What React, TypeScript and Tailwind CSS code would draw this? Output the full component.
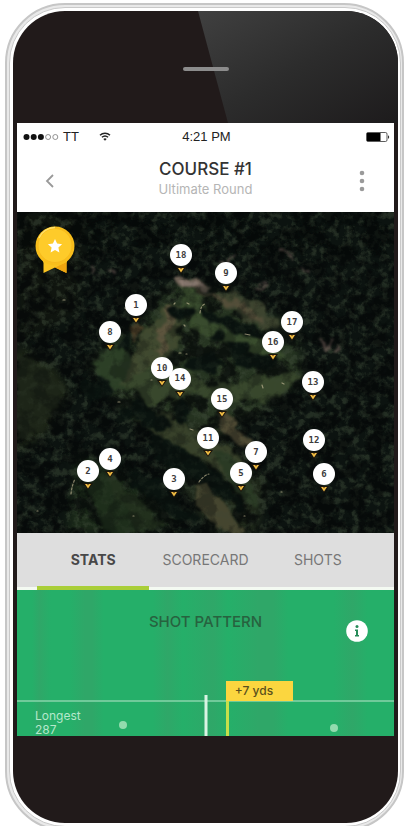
import React from "react";

const MAP_WIDTH = 377;
const MAP_HEIGHT = 321;

const holes = [
  { n: 18, x: 164, y: 43 },
  { n: 9, x: 209, y: 61 },
  { n: 1, x: 119, y: 93 },
  { n: 8, x: 93, y: 120 },
  { n: 17, x: 275, y: 110 },
  { n: 16, x: 256, y: 130 },
  { n: 10, x: 145, y: 156 },
  { n: 14, x: 163, y: 167 },
  { n: 15, x: 205, y: 187 },
  { n: 13, x: 296, y: 170 },
  { n: 11, x: 191, y: 226 },
  { n: 12, x: 297, y: 228 },
  { n: 7, x: 239, y: 240 },
  { n: 5, x: 224, y: 261 },
  { n: 6, x: 307, y: 262 },
  { n: 4, x: 93, y: 247 },
  { n: 2, x: 71, y: 259 },
  { n: 3, x: 157, y: 267 },
];

function SignalDots() {
  return (
    <svg width="36" height="8" viewBox="0 0 36 8" aria-hidden="true">
      <circle cx="3.5" cy="4" r="3" fill="#111" />
      <circle cx="10.7" cy="4" r="3" fill="#111" />
      <circle cx="17.9" cy="4" r="3" fill="#111" />
      <circle cx="25.1" cy="4" r="2.5" fill="none" stroke="#777" strokeWidth="0.8" />
      <circle cx="32.3" cy="4" r="2.5" fill="none" stroke="#777" strokeWidth="0.8" />
    </svg>
  );
}

function WifiIcon() {
  return (
    <svg width="12" height="9" viewBox="0 0 12 9" fill="none" stroke="#222" aria-hidden="true">
      <path d="M1 3.2C3.8.6 8.2.6 11 3.2" strokeWidth="1.5" />
      <path d="M2.9 5.3c1.8-1.6 4.4-1.6 6.2 0" strokeWidth="1.4" />
      <path d="M6 8.8 4.3 7c1-.9 2.4-.9 3.4 0Z" fill="#222" stroke="none" />
    </svg>
  );
}

function BatteryIcon() {
  return (
    <svg width="24" height="10" viewBox="0 0 24 10" aria-hidden="true">
      <rect x="0.5" y="0.5" width="20.5" height="9" rx="1.5" fill="#fff" stroke="#333" strokeWidth="0.8" />
      <rect x="1" y="1" width="13.5" height="8" fill="#000" />
      <path d="M22 3.2c1.6.4 1.6 3.2 0 3.6Z" fill="#333" />
    </svg>
  );
}

function AwardBadge() {
  return (
    <svg className="absolute left-[17px] top-[13px]" width="42" height="50" viewBox="0 0 42 50" role="img" aria-label="Award">
      <path d="M8 34h26l-1.500 4v10L21 42.500 9.500 48V38Z" fill="#fbc421" />
      <path d="M21 42.500 32.500 37v11Z" fill="#f0a50f" />
      <circle cx="21" cy="21" r="19.5" fill="#f9bf1c" />
      <circle cx="21" cy="20.500" r="17" fill="#fecb2a" stroke="#f6b81d" strokeWidth="0.8" />
      <path d="M5 13A18 18 0 0 1 21 2.500" fill="none" stroke="#ffe06a" strokeWidth="1.500" />
      <path d="m21 14 2.100 4.600 5 .6-3.700 3.400 1 4.900-4.400-2.500-4.400 2.500 1-4.900-3.700-3.400 5-.6Z" fill="#fff" />
    </svg>
  );
}

function Terrain() {
  return (
    <svg
      className="block h-auto w-full"
      viewBox="0 0 377 321"
      colorInterpolationFilters="sRGB"
      role="img"
      aria-label="Aerial view of the course"
    >
      <defs>
        <filter id="soft" x="-10%" y="-10%" width="120%" height="120%">
          <feGaussianBlur stdDeviation="5" />
        </filter>
        <filter id="rough" x="-10%" y="-10%" width="120%" height="120%">
          <feTurbulence type="fractalNoise" baseFrequency="0.07" numOctaves="3" seed="5" result="n" />
          <feDisplacementMap in="SourceGraphic" in2="n" scale="16" xChannelSelector="R" yChannelSelector="G" />
          <feGaussianBlur stdDeviation="0.8" />
        </filter>
        <filter id="canopy" x="0" y="0" width="100%" height="100%">
          <feTurbulence type="fractalNoise" baseFrequency="0.06" numOctaves="5" seed="11" />
          <feColorMatrix values="0 0 0 0 0.02  0 0 0 0 0.03  0 0 0 0 0.03  5 0 0 0 -2.1" />
        </filter>
        <filter id="leaves" x="0" y="0" width="100%" height="100%">
          <feTurbulence type="fractalNoise" baseFrequency="0.14" numOctaves="4" seed="3" />
          <feColorMatrix values="0 0 0 0 0.24  0 0 0 0 0.29  0 0 0 0 0.22  0 4 0 0 -1.8" />
        </filter>
      </defs>
      <rect width="377" height="321" fill="#0c1310" />
      <g filter="url(#soft)">
        <path d="M0 132 40 158 52 185 28 222 0 240Z" fill="#1e2617" />
        <path d="M0 0 70 0 60 100 0 130Z" fill="#10150f" />
        <path d="M70 150 124 108 155 72 210 77 276 116 290 165 235 205 180 225 110 205Z" fill="#263421" />
        <path d="M60 240 110 265 165 310 100 321 50 321Z" fill="#1b2a19" />
        <path d="M130 200 200 215 250 270 240 321 195 321 160 270Z" fill="#20291b" />
      </g>
      <rect width="377" height="321" filter="url(#leaves)" opacity="0.4" />
      <rect width="377" height="321" filter="url(#canopy)" opacity="0.65" />
      <g filter="url(#rough)">
        <path d="M0 140 38 160 48 180 22 220 0 228Z" fill="#1d2518" />
        <path d="M76 150 98 130 118 150 126 170 102 180 80 166Z" fill="#2c3f26" />
        <path d="M124 127 150 90 168 92 160 130 140 160 120 180 104 172Z" fill="#40492f" />
        <path d="M164 76 184 82 194 104 240 124 270 142 260 150 215 136 176 116Z" fill="#394c2d" />
        <path d="M196 78 240 90 264 115 250 120 210 95Z" fill="#3d442f" />
        <path d="M105 172 150 148 198 176 262 160 284 166 264 184 210 192 180 182 130 192Z" fill="#38472c" />
        <path d="M118 204 152 200 172 216 210 232 235 264 218 270 184 246 140 230Z" fill="#38412a" />
        <path d="M66 264 82 260 108 292 128 321 88 321Z" fill="#1e2e1b" />
        <path d="M84 265 104 270 148 314 122 318Z" fill="#22301d" />
        <path d="M178 268 194 276 230 321 206 321 178 292Z" fill="#45452f" />
        <path d="M194 238 206 234 228 262 244 292 230 295Z" fill="#2a3a24" />
        <path d="M150 91 157 91 155 118 145 143 138 139Z" fill="#5c543d" />
        <path d="M176 78 208 84 250 106 248 112 206 90Z" fill="#544e39" />
        <path d="M205 190 212 205 234 232 222 233 202 210Z" fill="#4f4a34" />
        <path d="M110 118 118 112 128 118 118 130Z" fill="#453924" />
        <path d="M157 65 178 65 192 74 185 79 160 77Z" fill="#6c6054" />
      </g>
      <g fill="#0a130f" filter="url(#rough)">
        <ellipse cx="163" cy="101" rx="12" ry="8" />
        <ellipse cx="202" cy="124" rx="9" ry="5" />
        <ellipse cx="222" cy="137" rx="12" ry="8" />
        <ellipse cx="186" cy="151" rx="20" ry="8" />
        <ellipse cx="239" cy="150" rx="24" ry="7" />
        <ellipse cx="80" cy="177" rx="17" ry="10" />
        <ellipse cx="120" cy="199" rx="18" ry="9" />
        <ellipse cx="166" cy="198" rx="7" ry="13" />
        <ellipse cx="139" cy="211" rx="17" ry="9" />
        <ellipse cx="109" cy="132" rx="5" ry="10" />
        <path d="M182 95 233 112 251 127 231 125 183 105Z" />
        <path d="M130 220 180 244 217 278 229 303 195 277 140 247Z" />
        <path d="M106 252 144 271 181 308 164 310 115 274Z" />
      </g>
      <rect width="377" height="321" filter="url(#leaves)" opacity="0.16" />
      <rect width="377" height="321" filter="url(#canopy)" opacity="0.3" />
      <g fill="none" stroke="#c9bd99" strokeLinecap="round" strokeWidth="1.2" opacity="0.65">
        <path d="M54 282q1-9 4-15M182 270q5-7 10-8M183 101q1-8 5-9" strokeDasharray="2 2" />
        <path d="m157 92 1-1M170 91l2 1M134 168h1M228 122l5 1M265 171l2 1M245 173l1 3M162 141h2M169 142h1M101 190h2M173 217l3 1M167 113l1 1M108 96l2 2M20 299h1M116 304h1M227 304h1M46 88h2M264 280h1" />
      </g>
      <g fill="none" stroke="#7c6660" strokeWidth="2.500" opacity="0.6" filter="url(#rough)">
        <path d="m262 38 14 5M284 54l5 9 5-2M302 126l10 9 5-7M316 142l9-3M206 53l14-9M242 72l8 4M74 56l8 4M90 58l5 4" />
      </g>
      <path d="M162 70 175 69 187 73 180 77 164 76Z" fill="#9a8880" opacity="0.65" filter="url(#rough)" />
    </svg>
  );
}

function Pin({ n, x, y }: { n: number; x: number; y: number }) {
  return (
    <button
      type="button"
      aria-label={`Hole ${n}`}
      className="absolute flex w-[22px] -translate-x-1/2 flex-col items-center"
      style={{ left: `${(x / MAP_WIDTH) * 100}%`, top: `${((y - 11) / MAP_HEIGHT) * 100}%` }}
    >
      <span className="flex size-[22px] items-center justify-center rounded-full bg-white font-['DejaVu_Sans_Mono',monospace] text-[9px] font-bold leading-none text-[#3c3c3c]">
        {n}
      </span>
      <svg className="mt-px" width="10" height="7" viewBox="0 0 10 7" aria-hidden="true">
        <path d="M0 0h10L5 7Z" fill="#1c150c" />
        <path d="M2 1h6L5 5.500Z" fill="#f0bd45" />
        <path d="M4 1h2L5 2.500Z" fill="#5b3d12" />
      </svg>
    </button>
  );
}

function StatusBar() {
  return (
    <div className="grid h-[27px] grid-cols-3 items-center pl-[6px] pr-1 font-['Liberation_Sans',Arial,sans-serif] text-[13px] leading-4 text-[#222]">
      <div className="flex items-center gap-1">
        <SignalDots />
        <span>TT</span>
        <span className="ml-4">
          <WifiIcon />
        </span>
      </div>
      <span className="text-center">4:21 PM</span>
      <span className="flex justify-end">
        <BatteryIcon />
      </span>
    </div>
  );
}

function Header() {
  return (
    <header className="flex h-[62px] items-center justify-between px-6">
      <button type="button" aria-label="Back" className="flex w-4 justify-center">
        <svg width="9" height="14" viewBox="0 0 9 14" fill="none" stroke="#999" strokeWidth="1.8">
          <path d="M8 1 2 7l6 6" />
        </svg>
      </button>
      <div className="pb-1 text-center">
        <h1 className="text-[17px] font-medium leading-5 text-[#333]">COURSE #1</h1>
        <p className="text-[13px] leading-5 text-[#b5b5b5]">Ultimate Round</p>
      </div>
      <button type="button" aria-label="More options" className="flex w-4 justify-center">
        <svg width="6" height="22" viewBox="0 0 6 22" fill="#9a9a9a">
          <circle cx="3" cy="3" r="2.300" />
          <circle cx="3" cy="11" r="2.300" />
          <circle cx="3" cy="19" r="2.300" />
        </svg>
      </button>
    </header>
  );
}

function Tabs() {
  return (
    <nav className="flex h-[57px] border-b-[3px] border-[#f4faf2] bg-[#dedede] px-5 text-sm text-[#777]">
      <button type="button" aria-current="page" className="-mb-[3px] flex-1 border-b-4 border-[#a9ce38] font-bold text-[#484848]">
        STATS
      </button>
      <button type="button" className="flex-1">
        SCORECARD
      </button>
      <button type="button" className="flex-1">
        SHOTS
      </button>
    </nav>
  );
}

function ShotPattern() {
  return (
    <section className="bg-[#25af69] bg-[linear-gradient(90deg,transparent_4%,#2fa768_6%,transparent_9%,transparent_14%,#2fa768_18%,#2fa768_20%,transparent_23%,transparent_36%,#2fa768_40%,transparent_44%,#2fa768_52%,transparent_56%,#2fa768_64%,#2fa768_68%,transparent_72%,transparent_84%,#2fa768_89%,transparent_93%)]">
      <div className="relative flex h-[91px] justify-center pt-[22px]">
        <h2 className="text-[15px] font-medium leading-5 text-[#27623f]">SHOT PATTERN</h2>
        <button type="button" aria-label="About shot pattern" className="absolute right-[26px] top-[30px]">
          <svg width="22" height="22" viewBox="0 0 22 22">
            <circle cx="11" cy="11" r="10.800" fill="#fff" />
            <circle cx="11" cy="6.500" r="1.500" fill="#278b59" />
            <path d="M9 9.500h3V15h1v1.500H9V15h1v-4H9Z" fill="#278b59" />
          </svg>
        </button>
      </div>
      <div className="relative h-[55px]">
        <div className="h-[19px]" />
        <div className="flex h-9 border-t-2 border-[#70ca9a] pl-[18px] pt-[7px] text-xs leading-[14px] text-[#b5e8cb]">
          <p>
            Longest
            <br />
            287
          </p>
        </div>
        <div className="absolute bottom-0 left-1/2 h-[41px] w-[3px] -translate-x-1/2 bg-[#d9f3e3]" />
        <div className="absolute bottom-0 left-[55.4%] top-0 w-[3px] bg-[#c6df4b]" />
        <div className="absolute left-[55.4%] top-0 flex h-5 w-[67px] items-center bg-[#fbd63f] pl-[9px] text-xs font-medium text-[#5a501c]">
          +7 yds
        </div>
        <div className="absolute bottom-[7px] left-[27%] size-2 rounded-full bg-[#92dbae]" />
        <div className="absolute bottom-1 left-[83%] size-2 rounded-full bg-[#92dbae]" />
      </div>
    </section>
  );
}

export default function App() {
  return (
    <main className="h-screen overflow-hidden bg-white pl-[5px] pt-[3px] font-['Inter',sans-serif]">
      <div className="rounded-[60px] border-2 border-[#c6c6c6] bg-[#e9e9e9] p-[2px] pr-px">
        <div className="rounded-[56px] border border-[#c9c9c9] bg-white p-[3px] pr-[2px]">
          <div className="relative overflow-hidden rounded-[52px] bg-[#211a1a] px-1">
            <svg className="absolute right-0 top-0 h-28 w-[52%]" viewBox="0 0 200 112" preserveAspectRatio="none" aria-hidden="true">
              <defs>
                <linearGradient id="glare" x1="0" y1="0" x2="1" y2="1">
                  <stop offset="0" stopColor="#404040" />
                  <stop offset="0.5" stopColor="#2c2c2c" />
                  <stop offset="1" stopColor="#1d1b1c" />
                </linearGradient>
              </defs>
              <path d="M0 0H200V112H30Z" fill="url(#glare)" />
            </svg>
            <div className="relative flex h-28 items-center justify-center pt-1">
              <div className="h-1 w-[46px] rounded-full bg-[#8c8c8c]" />
            </div>
            <div className="relative bg-white">
              <StatusBar />
              <Header />
              <div className="relative">
                <Terrain />
                <AwardBadge />
                {holes.map((hole) => (
                  <Pin key={hole.n} {...hole} />
                ))}
              </div>
              <Tabs />
              <ShotPattern />
            </div>
            <div className="h-[87px]" />
          </div>
        </div>
      </div>
    </main>
  );
}
